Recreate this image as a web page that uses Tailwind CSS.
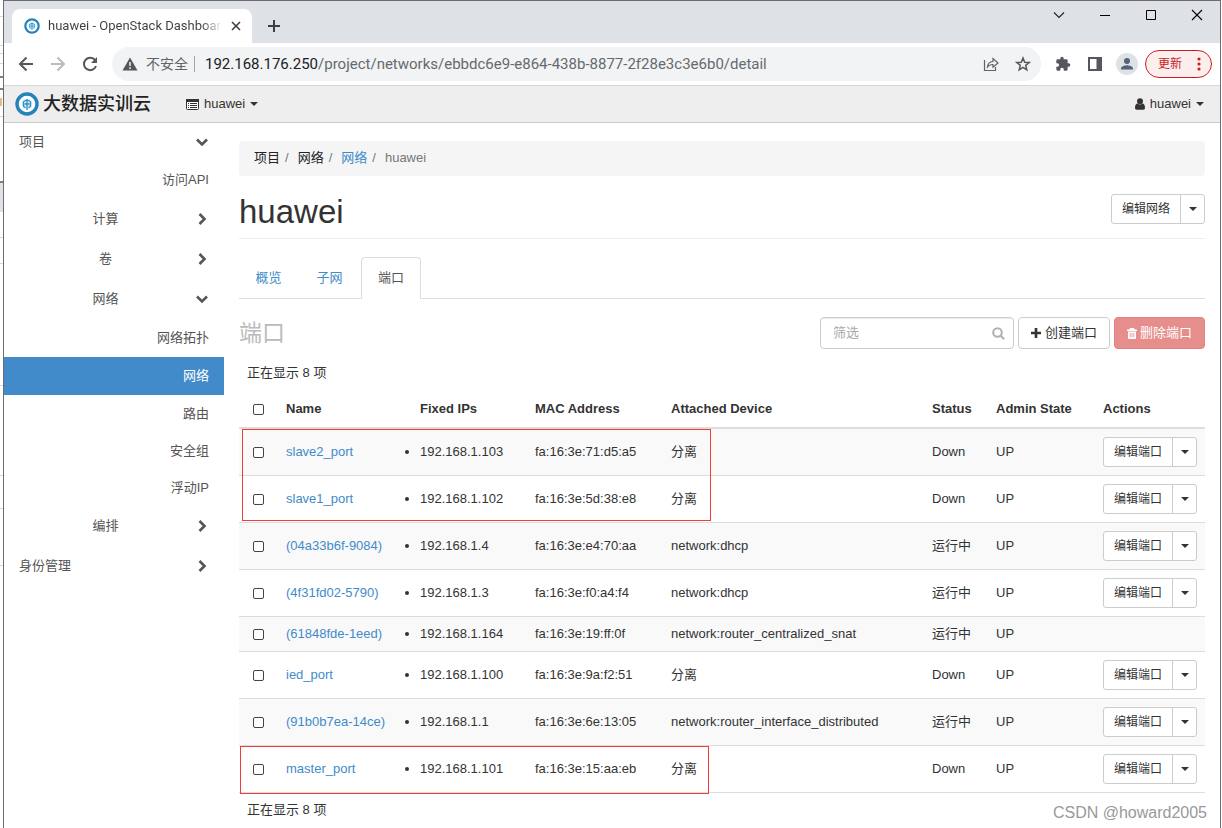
<!DOCTYPE html>
<html lang="zh-CN">
<head>
<meta charset="utf-8">
<title>huawei - OpenStack Dashboard</title>
<script src="https://cdn.jsdelivr.net/npm/@tailwindcss/browser@4"></script>
</head>
<body class="flex min-h-screen bg-white pr-px font-['Liberation_Sans','Noto_Sans_CJK_SC',sans-serif] text-[13px] leading-[18px] text-[#333]">
<svg width="0" height="0" class="absolute" aria-hidden="true">
  <symbol id="emblem" viewBox="0 0 24 24"><circle cx="12" cy="12" r="10" fill="#fff" stroke="#2583b8" stroke-width="3.4"/><circle cx="12" cy="12" r="5.600" fill="#d9eff8"/><path d="M12 7v11M8.500 9.500v4c0 1 1 1.800 2 1.800M15.500 9.500v4c0 1-1 1.800-2 1.800M8.500 9.500l3.500-1.500 3.500 1.500M9.500 12h5" fill="none" stroke="#2b8fc6" stroke-width="1.300"/></symbol>
  <symbol id="chev-down" viewBox="0 0 14 14"><path d="M2 4.500l5 5 5-5" fill="none" stroke="#555" stroke-width="2.600"/></symbol>
  <symbol id="chev-right" viewBox="0 0 14 14"><path d="M4.500 2l5 5-5 5" fill="none" stroke="#555" stroke-width="2.600"/></symbol>
</svg>
<div class="w-[3px] shrink-0 overflow-hidden" aria-hidden="true">
  <svg width="3" height="828"><path d="M0 16.500h3M0 45.500h3M0 53.500h3M0 63.500h3M0 116.500h3M0 237.500h3M0 263.500h3M0 385.500h3M0 475.500h3M0 508.500h3M0 565.500h3" stroke="#d4d6d9"/><path d="M0 77h3M0 89h3M0 182h3" stroke="#555" stroke-width="1.500"/><path d="M0 183h3v29H0z" fill="#dfe3e8"/><path d="M1 98v8" stroke="#d9a85c" stroke-width="1.500"/></svg>
</div>
<div class="flex min-w-0 flex-1 flex-col border-x border-t border-[#6b6d70]">

  <!-- tab strip -->
  <div class="flex h-[42px] bg-[#dee1e6]">
    <div class="ml-2 mt-2 flex w-60 items-center rounded-t-lg bg-white pl-3 pr-2.5">
      <svg class="size-4 shrink-0"><use href="#emblem"/></svg>
      <span class="ml-2 flex-1 overflow-hidden whitespace-nowrap bg-linear-to-r from-[#3c4043] from-88% to-white bg-clip-text font-[Roboto] text-[13px] text-transparent">huawei - OpenStack Dashboard</span>
      <button aria-label="关闭标签页" class="ml-2"><svg width="12" height="12" viewBox="0 0 12 12" fill="none" stroke="#3c4043" stroke-width="1.600"><path d="M2 2l8 8M10 2l-8 8"/></svg></button>
    </div>
    <button aria-label="新标签页" class="ml-4 mt-2"><svg width="12" height="12" viewBox="0 0 12 12" fill="none" stroke="#3c4043" stroke-width="2"><path d="M6 0v12M0 6h12"/></svg></button>
    <div class="ml-auto mr-[17px] flex h-7 items-center gap-[34px]">
      <button aria-label="搜索标签页"><svg width="12" height="12" viewBox="0 0 12 12" fill="none" stroke="#222" stroke-width="1.100"><path d="M1 3.500l5 5 5-5"/></svg></button>
      <button aria-label="最小化"><svg width="12" height="12" viewBox="0 0 12 12" fill="none" stroke="#000"><path d="M1 6.500h10"/></svg></button>
      <button aria-label="最大化"><svg width="12" height="12" viewBox="0 0 12 12" fill="none" stroke="#000"><path d="M1.500 1.500h9v9h-9z"/></svg></button>
      <button aria-label="关闭"><svg width="12" height="12" viewBox="0 0 12 12" fill="none" stroke="#000" stroke-width="1.100"><path d="M1 1l10 10M11 1L1 11"/></svg></button>
    </div>
  </div>

  <!-- toolbar -->
  <div class="flex h-[43px] items-center border-b border-[#d5d7da] pl-3.5 pr-2">
    <div class="flex shrink-0 gap-4">
      <button aria-label="后退"><svg width="16" height="16" viewBox="0 0 16 16" fill="none" stroke="#54585d" stroke-width="2"><path d="M15 8H2M8.500 1.500L2 8l6.500 6.500"/></svg></button>
      <button aria-label="前进"><svg width="16" height="16" viewBox="0 0 16 16" fill="none" stroke="#b9bbbe" stroke-width="2"><path d="M1 8h13M7.500 1.500L14 8l-6.500 6.500"/></svg></button>
      <button aria-label="重新加载"><svg width="16" height="16" viewBox="0 0 16 16" fill="none" stroke="#54585d" stroke-width="2"><path d="M13.200 4.300A6.200 6.200 0 1 0 14 10"/><path d="M15 1v6H9z" fill="#54585d" stroke="none"/></svg></button>
    </div>
    <div class="ml-3.5 flex h-[34px] min-w-0 flex-1 items-center rounded-full bg-[#f1f3f4] pl-2.5 pr-2.5">
      <svg width="16" height="16" viewBox="0 0 16 16"><path d="M8 1.500L15.500 14.500H.5z" fill="#54585d"/><path d="M8 6v4M8 11.300v1.600" stroke="#f1f3f4" stroke-width="1.500"/></svg>
      <span class="ml-2 text-sm text-[#5f6368]">不安全</span>
      <span class="ml-1.5 mr-2.5 h-4 w-px bg-[#a0a3a7]"></span>
      <span class="flex-1 overflow-hidden whitespace-nowrap font-[Roboto] text-[15px] leading-5 text-[#666a6f]"><span class="text-[#202124]">192.168.176.250</span>/project/networks/ebbdc6e9-e864-438b-8877-2f28e3c3e6b0/detail</span>
      <button aria-label="分享" class="mr-4"><svg width="16" height="16" viewBox="0 0 16 16" fill="none" stroke="#5f6368" stroke-width="1.200"><path d="M1.500 4v10.500h11V11"/><path d="M4.500 11c.3-3.500 2-5.300 5.500-5.500V2.500L15 7l-5 4.300V8.500c-2.500 0-4.200.7-5.500 2.500z"/></svg></button>
      <button aria-label="收藏"><svg width="16" height="16" viewBox="0 0 16 16" fill="none" stroke="#54585d" stroke-width="1.500"><path d="M8 2l1.700 4.200 4.500.3-3.500 2.900 1.100 4.400L8 11.400l-3.800 2.400 1.100-4.400-3.500-2.900 4.500-.3z"/></svg></button>
    </div>
    <button aria-label="扩展程序" class="ml-3.5"><svg width="16" height="16" viewBox="0 0 24 24" fill="#54585d"><path d="M20.500 11H19V7a2 2 0 0 0-2-2h-4V3.500a2.500 2.500 0 0 0-5 0V5H4a2 2 0 0 0-2 2v3.800h1.500a2.700 2.700 0 0 1 0 5.400H2V20a2 2 0 0 0 2 2h3.800v-1.500a2.700 2.700 0 0 1 5.400 0V22H17a2 2 0 0 0 2-2v-4h1.500a2.500 2.500 0 0 0 0-5z"/></svg></button>
    <button aria-label="侧边栏" class="ml-4"><svg width="16" height="16" viewBox="0 0 16 16"><path d="M1 1h14v14H1z" fill="#54585d"/><path d="M3 3h6.500v10H3z" fill="#fff"/></svg></button>
    <button aria-label="个人资料" class="ml-[13px]"><svg width="22" height="22" viewBox="0 0 22 22"><circle cx="11" cy="11" r="11" fill="#dee1e6"/><circle cx="11" cy="8" r="3" fill="#54627a"/><path d="M5 16.500v-1.200c0-2 4-3.100 6-3.100s6 1.100 6 3.100v1.200z" fill="#54627a"/></svg></button>
    <button class="ml-[7px] flex h-7 w-[67px] shrink-0 items-center justify-between rounded-full border border-[#c5221f] bg-[#fbeeed] pl-3 pr-2.5 text-xs text-[#c5221f]">更新<svg width="4" height="14" viewBox="0 0 4 14" fill="#c5221f"><circle cx="2" cy="2" r="1.600"/><circle cx="2" cy="7" r="1.600"/><circle cx="2" cy="12" r="1.600"/></svg></button>
  </div>

  <!-- site bar -->
  <header class="flex h-[37px] items-center border-b border-[#ccc] bg-[#eee] pl-[11px] pr-4">
    <a href="#" class="flex items-center gap-1 text-[18px] font-medium leading-6 text-[#222]"><svg class="size-6"><use href="#emblem"/></svg>大数据实训云</a>
    <button class="ml-[35px] flex items-center"><svg width="13" height="11" viewBox="0 0 13 11"><rect x=".5" y=".5" width="12" height="10" rx="1" fill="#fff" stroke="#333"/><path d="M0 0h13v3H0z" fill="#333"/><path d="M2 4.500h1M2 6.500h1M2 8.500h1M4 4.500h7M4 6.500h7M4 8.500h7" stroke="#333"/></svg><span class="mx-[5px]">huawei</span><svg width="8" height="4" viewBox="0 0 8 4"><path d="M0 0h8L4 4z" fill="#333"/></svg></button>
    <button class="ml-auto flex items-center"><svg width="10" height="12" viewBox="0 0 10 12" fill="#333"><circle cx="5" cy="3.200" r="3"/><path d="M0 10c0-3 1-4.500 2.500-4.500 1.500 1.200 3.500 1.200 5 0C9 5.500 10 7 10 10c0 1-.7 1.700-1.700 1.700H1.700C.7 11.700 0 11 0 10z"/></svg><span class="mx-[5px]">huawei</span><svg width="8" height="4" viewBox="0 0 8 4"><path d="M0 0h8L4 4z" fill="#333"/></svg></button>
  </header>

  <div class="flex flex-1">
    <nav class="w-[220px] shrink-0 text-[#555]">
      <a href="#" class="flex h-[38px] items-center justify-between px-[15px]">项目<svg class="size-3.5"><use href="#chev-down"/></svg></a>
      <a href="#" class="flex h-[38px] items-center justify-end pr-[15px]">访问API</a>
      <a href="#" class="flex h-10 items-center pl-6 pr-[15px]"><span class="flex-1 text-center">计算</span><span class="flex w-[26px] justify-end"><svg class="size-3.5"><use href="#chev-right"/></svg></span></a>
      <a href="#" class="flex h-10 items-center pl-6 pr-[15px]"><span class="flex-1 text-center">卷</span><span class="flex w-[26px] justify-end"><svg class="size-3.5"><use href="#chev-right"/></svg></span></a>
      <a href="#" class="flex h-10 items-center pl-6 pr-[15px]"><span class="flex-1 text-center">网络</span><span class="flex w-[26px] justify-end"><svg class="size-3.5"><use href="#chev-down"/></svg></span></a>
      <a href="#" class="flex h-[38px] items-center justify-end pr-[15px]">网络拓扑</a>
      <a href="#" class="flex h-[38px] items-center justify-end bg-[#428bca] pr-[15px] text-white">网络</a>
      <a href="#" class="flex h-[37px] items-center justify-end pr-[15px]">路由</a>
      <a href="#" class="flex h-[37px] items-center justify-end pr-[15px]">安全组</a>
      <a href="#" class="flex h-[37px] items-center justify-end pr-[15px]">浮动IP</a>
      <a href="#" class="flex h-10 items-center pl-6 pr-[15px]"><span class="flex-1 text-center">编排</span><span class="flex w-[26px] justify-end"><svg class="size-3.5"><use href="#chev-right"/></svg></span></a>
      <a href="#" class="flex h-10 items-center justify-between px-[15px]">身份管理<svg class="size-3.5"><use href="#chev-right"/></svg></a>
    </nav>

    <main class="min-w-0 flex-1 pl-[15px] pr-[15px] pt-[18px]">
      <ol class="flex h-[35px] items-center rounded bg-[#f5f5f5] px-[15px] pb-0.5 text-[#222]">
        <li>项目</li><li class="px-[5px] text-[#777]">/</li>
        <li class="ml-1">网络</li><li class="px-[5px] text-[#777]">/</li>
        <li class="ml-1"><a href="#" class="text-[#428bca]">网络</a></li><li class="px-[5px] text-[#777]">/</li>
        <li class="ml-1 text-[#777]">huawei</li>
      </ol>

      <div class="mt-[18px] flex items-start justify-between border-b border-[#eee] pb-2">
        <h1 class="text-[33px] leading-9">huawei</h1>
        <div class="flex h-[30px] rounded-[3px] border border-[#ccc] text-xs"><button class="px-2.5">编辑网络</button><button aria-label="更多操作" class="flex w-6 items-center justify-center border-l border-[#ccc]"><svg width="8" height="4" viewBox="0 0 8 4"><path d="M0 0h8L4 4z" fill="#333"/></svg></button></div>
      </div>

      <div class="mt-[18px] flex gap-0.5 border-b border-[#ddd]">
        <a href="#" class="-mb-px flex h-[42px] w-[59px] items-center justify-center text-[#428bca]">概览</a>
        <a href="#" class="-mb-px flex h-[42px] w-[59px] items-center justify-center text-[#428bca]">子网</a>
        <a href="#" class="-mb-px flex h-[42px] w-[60px] items-center justify-center rounded-t border border-[#ddd] border-b-white bg-white text-[#555]">端口</a>
      </div>

      <div class="mt-[18px] flex h-8 items-center gap-1">
        <h2 class="mr-auto text-[23px] leading-8 text-[#bbb]">端口</h2>
        <div class="flex h-8 w-[194px] items-center rounded border border-[#ccc] pl-3 pr-2 shadow-[inset_0_1px_1px_rgba(0,0,0,0.075)]"><input aria-label="筛选" type="text" placeholder="筛选" class="min-w-0 flex-1 outline-none placeholder:text-[#aaa]"><svg width="13" height="13" viewBox="0 0 13 13" fill="none" stroke="#b0b0b0" stroke-width="2"><circle cx="5.500" cy="5.500" r="4.300"/><path d="M8.700 8.700l3.500 3.500"/></svg></div>
        <button class="flex h-8 items-center gap-1 rounded border border-[#ccc] px-3"><svg width="10" height="10" viewBox="0 0 10 10" stroke="#333" stroke-width="2.600"><path d="M5 0v10M0 5h10"/></svg>创建端口</button>
        <button disabled class="flex h-8 items-center gap-[3px] rounded border border-[#e38280] bg-[#e68e8c] px-3 text-white"><svg width="10" height="11" viewBox="0 0 10 11"><path d="M3 0h4l.6 1.500H10V3H0V1.500h2.400zM1 3.500h8V10c0 .6-.4 1-1 1H2c-.6 0-1-.4-1-1z" fill="#fff"/><path d="M3.200 4.800v4.500M5 4.800v4.500M6.800 4.800v4.500" stroke="#e68e8c" stroke-width=".8"/></svg>删除端口</button>
      </div>

      <div class="relative mt-[7px]">
        <p class="p-2">正在显示 8 项</p>
        <table class="mt-px w-full table-fixed border-collapse">
          <colgroup><col class="w-[39px]"><col class="w-[134px]"><col class="w-[115px]"><col class="w-[136px]"><col><col class="w-16"><col class="w-[107px]"><col class="w-[110px]"></colgroup>
          <thead>
            <tr class="h-[37px] border-b-2 border-[#ddd] text-left [&>th]:px-2">
              <th class="text-center"><input aria-label="全选" type="checkbox" class="block size-[11px] mx-auto appearance-none rounded-[2px] border border-[#444] bg-white"></th>
              <th>Name</th><th>Fixed IPs</th><th>MAC Address</th><th>Attached Device</th><th>Status</th><th>Admin State</th><th>Actions</th>
            </tr>
          </thead>
          <tbody id="rows"></tbody>
        </table>
        <p class="p-2">正在显示 8 项</p>
        <div class="pointer-events-none absolute left-[3px] top-[73px] h-[92px] w-[469px] border border-[#f23c3c]"></div>
        <div class="pointer-events-none absolute left-px top-[390px] h-12 w-[469px] border border-[#f23c3c]"></div>
      </div>
    </main>
  </div>
</div>
<div class="pointer-events-none absolute right-[15px] top-[803px] text-base leading-5 text-[#999]">CSDN @howard2005</div>

<template id="row">
  <tr class="border-b border-[#ddd] odd:bg-[#f9f9f9] [&>td]:px-2 [&>td]:py-2">
    <td><input type="checkbox" class="block size-[11px] mx-auto appearance-none rounded-[2px] border border-[#444] bg-white"></td>
    <td><a href="#" class="text-[#428bca]"></a></td>
    <td><ul class="list-disc"><li></li></ul></td>
    <td></td><td></td><td></td><td></td>
    <td><div class="flex h-[30px] w-[94px] rounded-[3px] border border-[#ccc] bg-white text-xs"><button class="flex-1">编辑端口</button><button aria-label="更多操作" class="flex w-6 items-center justify-center border-l border-[#ccc]"><svg width="8" height="4" viewBox="0 0 8 4"><path d="M0 0h8L4 4z" fill="#333"/></svg></button></div></td>
  </tr>
</template>
<script>
const data = [
  ['slave2_port','192.168.1.103','fa:16:3e:71:d5:a5','分离','Down'],
  ['slave1_port','192.168.1.102','fa:16:3e:5d:38:e8','分离','Down'],
  ['(04a33b6f-9084)','192.168.1.4','fa:16:3e:e4:70:aa','network:dhcp','运行中'],
  ['(4f31fd02-5790)','192.168.1.3','fa:16:3e:f0:a4:f4','network:dhcp','运行中'],
  ['(61848fde-1eed)','192.168.1.164','fa:16:3e:19:ff:0f','network:router_centralized_snat','运行中',true],
  ['ied_port','192.168.1.100','fa:16:3e:9a:f2:51','分离','Down'],
  ['(91b0b7ea-14ce)','192.168.1.1','fa:16:3e:6e:13:05','network:router_interface_distributed','运行中'],
  ['master_port','192.168.1.101','fa:16:3e:15:aa:eb','分离','Down']
];
for (const [name, ip, mac, device, status, locked] of data) {
  const tr = document.getElementById('row').content.cloneNode(true);
  const td = tr.querySelectorAll('td');
  td[0].firstChild.setAttribute('aria-label', name);
  td[1].firstChild.textContent = name;
  td[2].querySelector('li').textContent = ip;
  td[3].textContent = mac;
  td[4].textContent = device;
  td[5].textContent = status;
  td[6].textContent = 'UP';
  if (locked) td[7].textContent = '';
  document.getElementById('rows').append(tr);
}
</script>
</body>
</html>
